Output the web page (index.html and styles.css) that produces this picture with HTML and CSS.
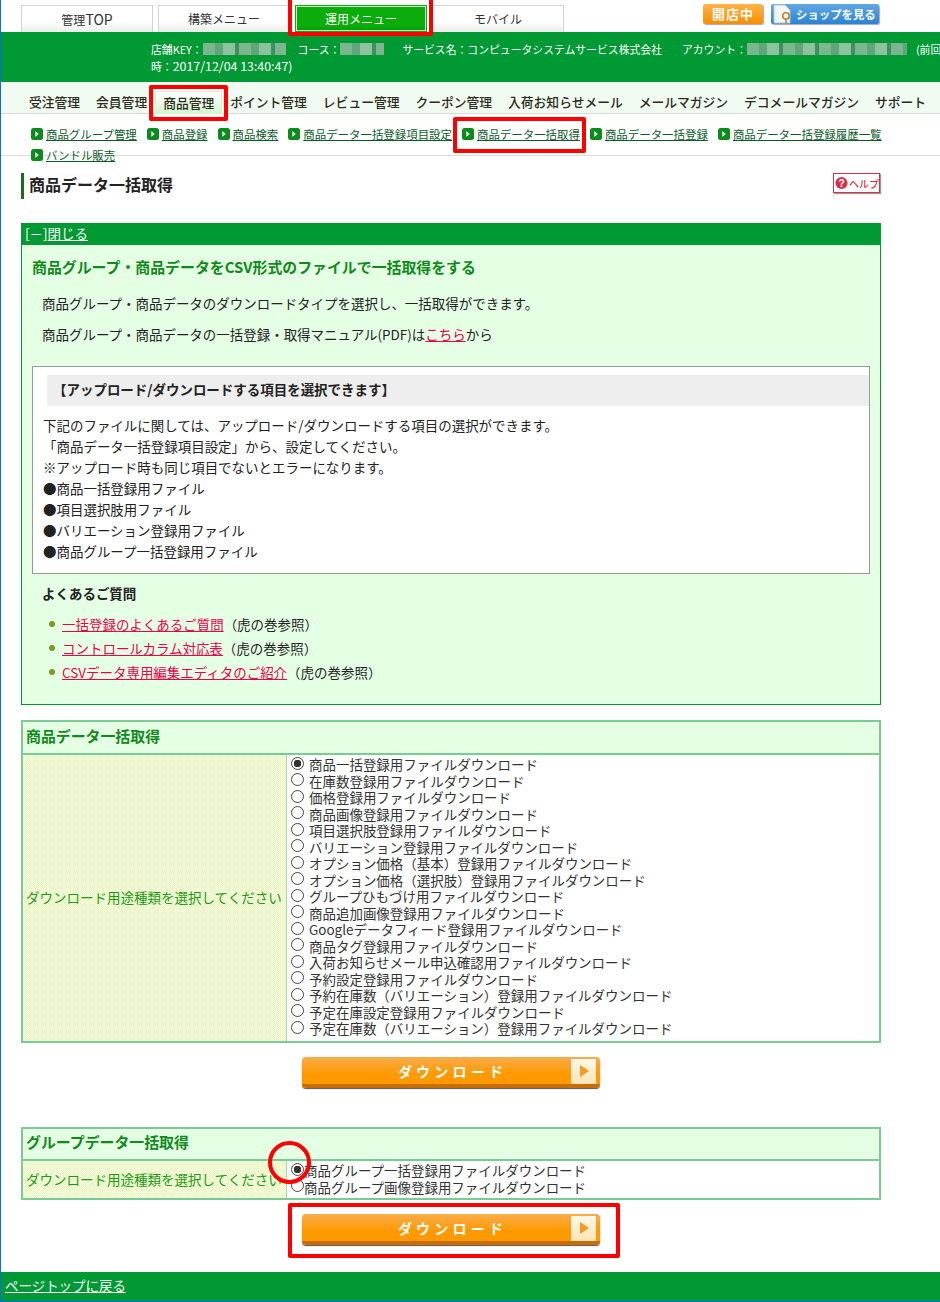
FILE: index.html
```html
<!DOCTYPE html>
<html lang="ja">
<head>
<meta charset="utf-8">
<title>商品データ一括取得</title>
<link rel="stylesheet" href="styles.css">
</head>
<body>
<svg class="defs" width="0" height="0" aria-hidden="true">
  <symbol id="sq" viewBox="0 0 12 12">
    <rect width="12" height="12" rx="2.5" fill="#0b8a1e"/>
    <path d="M4.6 3.6 7.4 6 4.6 8.4Z" fill="#fff" stroke="#fff" stroke-width=".5" stroke-linejoin="round"/>
  </symbol>
</svg>
<div class="page">
  <div class="topbar">
    <div class="tabs">
      <a class="tab">管理<span class="lat">TOP</span></a>
      <a class="tab">構築メニュー</a>
      <a class="tab tab-on">運用メニュー</a>
      <a class="tab">モバイル</a>
    </div>
    <div class="topbtns">
      <span class="pill pill-open">開店中</span>
      <span class="pill pill-shop">
        <svg class="shop-ic" viewBox="0 0 24 20" width="24" height="20"><path d="M3 1h11l5 5v13H3z" fill="#f4f6f8" stroke="#b9c6d2"/><circle cx="15" cy="12" r="3.2" fill="none" stroke="#b58a2a" stroke-width="1.6"/><path d="M15 15v4" stroke="#b58a2a" stroke-width="1.6"/></svg>ショップを見る
      </span>
    </div>
  </div>
  <div class="shopinfo">
    <div class="infoline">店舗KEY：<span class="mosaic m83"></span><span class="sp"></span>コース：<span class="mosaic m44"></span><span class="sp3"></span>サービス名：コンピュータシステムサービス株式会社<span class="sp4"></span>アカウント：<span class="mosaic m160"></span><span class="sp2"></span>(前回</div>
    <div class="infoline">時：<span class="stamp">2017/12/04 13:40:47)</span></div>
  </div>
  <nav class="mainnav">
    <a class="mn">受注管理</a><a class="mn">会員管理</a><a class="mn mn-on">商品管理</a><a class="mn">ポイント管理</a><a class="mn">レビュー管理</a><a class="mn">クーポン管理</a><a class="mn">入荷お知らせメール</a><a class="mn">メールマガジン</a><a class="mn">デコメールマガジン</a><a class="mn">サポート</a>
  </nav>
  <div class="subwrap">
    <div class="subnav">
      <a class="sn"><svg class="snic"><use href="#sq"/></svg><span>商品グループ管理</span></a>
      <a class="sn"><svg class="snic"><use href="#sq"/></svg><span>商品登録</span></a>
      <a class="sn"><svg class="snic"><use href="#sq"/></svg><span>商品検索</span></a>
      <a class="sn"><svg class="snic"><use href="#sq"/></svg><span>商品データ一括登録項目設定</span></a>
      <a class="sn"><svg class="snic"><use href="#sq"/></svg><span>商品データ一括取得</span></a>
      <a class="sn"><svg class="snic"><use href="#sq"/></svg><span>商品データ一括登録</span></a>
      <a class="sn"><svg class="snic"><use href="#sq"/></svg><span>商品データ一括登録履歴一覧</span></a>
      <a class="sn"><svg class="snic"><use href="#sq"/></svg><span>バンドル販売</span></a>
    </div>
  </div>
  <main class="content">
    <div class="titlerow">
      <h1 class="pagetitle">商品データ一括取得</h1>
      <a class="helpbtn"><svg viewBox="0 0 14 14" width="14" height="14"><circle cx="7" cy="7" r="6.5" fill="#d8304a"/><text x="7" y="11" text-anchor="middle" class="qm">?</text></svg><span>ヘルプ</span></a>
    </div>

    <section class="infobox">
      <div class="infohead">[－]<a class="closelink">閉じる</a></div>
      <div class="infobody">
        <h2 class="infotitle">商品グループ・商品データをCSV形式のファイルで一括取得をする</h2>
        <p class="lead">商品グループ・商品データのダウンロードタイプを選択し、一括取得ができます。</p>
        <p class="lead lead2">商品グループ・商品データの一括登録・取得マニュアル(PDF)は<a class="pink">こちら</a>から</p>
        <div class="notebox">
          <div class="notehead">【アップロード/ダウンロードする項目を選択できます】</div>
          <div class="notelines">
            <div>下記のファイルに関しては、アップロード/ダウンロードする項目の選択ができます。</div>
            <div>「商品データ一括登録項目設定」から、設定してください。</div>
            <div>※アップロード時も同じ項目でないとエラーになります。</div>
            <div>●商品一括登録用ファイル</div>
            <div>●項目選択肢用ファイル</div>
            <div>●バリエーション登録用ファイル</div>
            <div>●商品グループ一括登録用ファイル</div>
          </div>
        </div>
        <h3 class="faqtitle">よくあるご質問</h3>
        <ul class="faq">
          <li><a class="pink">一括登録のよくあるご質問</a>（虎の巻参照）</li>
          <li><a class="pink">コントロールカラム対応表</a>（虎の巻参照）</li>
          <li><a class="pink">CSVデータ専用編集エディタのご紹介</a>（虎の巻参照）</li>
        </ul>
      </div>
    </section>

    <section class="formbox first">
      <h2 class="formhead">商品データ一括取得</h2>
      <div class="formrow">
        <div class="formlabel">ダウンロード用途種類を選択してください</div>
        <div class="formopts">
          <label class="opt"><input type="radio" name="a" checked>商品一括登録用ファイルダウンロード</label>
          <label class="opt"><input type="radio" name="a">在庫数登録用ファイルダウンロード</label>
          <label class="opt"><input type="radio" name="a">価格登録用ファイルダウンロード</label>
          <label class="opt"><input type="radio" name="a">商品画像登録用ファイルダウンロード</label>
          <label class="opt"><input type="radio" name="a">項目選択肢登録用ファイルダウンロード</label>
          <label class="opt"><input type="radio" name="a">バリエーション登録用ファイルダウンロード</label>
          <label class="opt"><input type="radio" name="a">オプション価格（基本）登録用ファイルダウンロード</label>
          <label class="opt"><input type="radio" name="a">オプション価格（選択肢）登録用ファイルダウンロード</label>
          <label class="opt"><input type="radio" name="a">グループひもづけ用ファイルダウンロード</label>
          <label class="opt"><input type="radio" name="a">商品追加画像登録用ファイルダウンロード</label>
          <label class="opt"><input type="radio" name="a">Googleデータフィード登録用ファイルダウンロード</label>
          <label class="opt"><input type="radio" name="a">商品タグ登録用ファイルダウンロード</label>
          <label class="opt"><input type="radio" name="a">入荷お知らせメール申込確認用ファイルダウンロード</label>
          <label class="opt"><input type="radio" name="a">予約設定登録用ファイルダウンロード</label>
          <label class="opt"><input type="radio" name="a">予約在庫数（バリエーション）登録用ファイルダウンロード</label>
          <label class="opt"><input type="radio" name="a">予定在庫設定登録用ファイルダウンロード</label>
          <label class="opt"><input type="radio" name="a">予定在庫数（バリエーション）登録用ファイルダウンロード</label>
        </div>
      </div>
    </section>
    <div class="btnrow btnrow1"><button class="dl" type="button"><span class="dltext">ダウンロード</span><span class="dlarrow"></span></button></div>

    <section class="formbox second">
      <h2 class="formhead">グループデータ一括取得</h2>
      <div class="formrow">
        <div class="formlabel">ダウンロード用途種類を選択してください</div>
        <div class="formopts tight">
          <label class="opt"><input type="radio" name="b" checked>商品グループ一括登録用ファイルダウンロード</label>
          <label class="opt"><input type="radio" name="b">商品グループ画像登録用ファイルダウンロード</label>
        </div>
      </div>
    </section>
    <div class="btnrow btnrow2"><button class="dl" type="button"><span class="dltext">ダウンロード</span><span class="dlarrow"></span></button></div>
  </main>
  <footer class="foot"><a class="toplink">ページトップに戻る</a></footer>
</div>
<div class="mark mark-tab"></div>
<div class="mark mark-nav"></div>
<div class="mark mark-sub"></div>
<div class="mark mark-btn"></div>
<div class="mark mark-circle"></div>
</body>
</html>
```
FILE: styles.css
```css
* { box-sizing: border-box; }
html, body { margin: 0; padding: 0; }
body {
  width: 940px;
  height: 1302px;
  overflow: hidden;
  position: relative;
  background: #fff;
  color: #222;
  font-family: "Noto Sans CJK JP", "Noto Sans", sans-serif;
  font-size: 13.47px;
}
.defs { position: absolute; }
.page {
  height: 1302px;
  border-left: 1px solid #0a6fdc;
  border-bottom: 1px solid #0a6fdc;
  display: flex;
  flex-direction: column;
}
a { color: inherit; }

/* top */
.topbar { height: 32px; display: flex; justify-content: space-between; padding: 0 61px 0 20px; }
.tabs { display: flex; gap: 5px; padding-top: 5px; }
.tab {
  width: 132px; height: 27px;
  border: 1px solid #d4d4d4; border-bottom: 0;
  background: linear-gradient(#fff 60%, #ececec);
  font-size: 12px; line-height: 26px; text-align: center; color: #333;
}
.lat { font-size: 14px; }
.tab-on {
  background: linear-gradient(#0aad0a 80%, #0b990b);
  color: #fff;
  border: 1px solid #0aad0a;
  box-shadow: inset 0 0 0 1px #cfeecf;
}
.topbtns { display: flex; gap: 8px; padding-top: 4px; }
.pill {
  height: 20px; color: #fff; font-weight: 700; font-size: 13px; line-height: 19px;
  border-radius: 2px; box-shadow: 1px 1px 1px #aaa; text-align: center;
}
.pill-open { width: 60px; background: linear-gradient(#ffb347, #f78f00); letter-spacing: 1px; }
.pill-shop {
  width: 108px; background: linear-gradient(#62a8e6, #2a84d2);
  display: flex; align-items: center; font-size: 11.4px; white-space: nowrap; overflow: hidden;
}
.shop-ic { flex: none; margin-right: 1px; }
.shopinfo { height: 50px; background: #009933; color: #fff; padding: 9px 0 0 150px; overflow: hidden; }
.infoline { font-size: 10.83px; line-height: 16.5px; white-space: nowrap; display: flex; align-items: center; }
.stamp { font-size: 12.4px; }
.sp { display: inline-block; flex: none; width: 12px; }
.sp2 { display: inline-block; flex: none; width: 9px; }
.sp3 { display: inline-block; flex: none; width: 18px; }
.sp4 { display: inline-block; flex: none; width: 20px; }
.mosaic {
  display: inline-block; flex: none; height: 12px;
  background: repeating-linear-gradient(90deg, #7ab78f 0 12px, #5fa67a 12px 20px, #8cc2a0 20px 32px, #3f9060 32px 36px);
}
.m83 { width: 83px; }
.m44 { width: 44px; }
.m160 { width: 160px; }

.mainnav {
  height: 32px; padding: 0 0 0 20px; display: flex; align-items: flex-end;
  background: #f1fbf1; border-bottom: 1px solid #d6dcd6;
}
.mn {
  padding: 0 8px; height: 23px; line-height: 21px; font-size: 12.78px; font-weight: 500;
  color: #2b2b1a; white-space: nowrap; margin-bottom: -1px;
}
.mn-on {
  background: linear-gradient(#fff, #d4f5cf);
  border: 1px solid #dfe8df; border-bottom: 0;
  padding: 0 7px;
}
.subwrap { height: 42px; border-bottom: 1px solid #ddd; position: relative; }
.subnav {
  width: 885px; padding: 9px 0 0 30px;
  display: flex; flex-wrap: wrap; column-gap: 10px;
}
.sn { display: flex; align-items: center; gap: 3px; height: 21px; font-size: 11.45px; color: #0c5a2a; white-space: nowrap; }
.sn span { text-decoration: underline; }
.snic { width: 12px; height: 12px; }

/* content */
.content { padding: 0 0 0 20px; width: 880px; flex: 1; }
.titlerow { display: flex; justify-content: space-between; align-items: flex-start; margin-top: 17px; height: 26px; }
.pagetitle {
  margin: 0; height: 26px; border-left: 3px solid #1a6b1a; padding-left: 5px;
  font-size: 16px; line-height: 22px; font-weight: 700; color: #222;
}
.helpbtn {
  width: 47px; height: 20px; margin-right: 1px; border: 1px solid #d8304a; background: #fff;
  box-shadow: 1px 1px 1px #999; display: flex; align-items: center; gap: 1px; padding-left: 1px;
  font-size: 10px; font-weight: 500; color: #d8304a; white-space: nowrap;
}
.qm { fill: #fff; font-family: "Liberation Sans", sans-serif; font-weight: 700; font-size: 11px; }

.infobox { margin-top: 24px; border: 1px solid #009933; height: 482px; background: #e5ffe5; }
.infohead { height: 22px; background: #009933; color: #fff; padding-left: 4px; line-height: 21px; margin: -1px -1px 0; }
.closelink { text-decoration: underline; }
.infobody { padding: 0 10px; }
.infotitle { margin: 0; padding-top: 10px; height: 43px; font-size: 14.9px; line-height: 24px; font-weight: 700; color: #118a1c; }
.lead { margin: 0; padding-left: 10px; line-height: 21px; padding-top: 5px; height: 31px; }
.lead2 { height: 31px; }
.pink { color: #e8004c; text-decoration: underline; }
.notebox { margin-top: 16px; height: 208px; width: 838px; border: 1px solid #999; background: #fff; padding: 8px 0 0 14px; }
.notehead { height: 31px; background: #eee; padding-left: 6px; font-weight: 700; line-height: 29px; width: 822px; }
.notelines { margin-left: -4px; padding-top: 9px; line-height: 21px; }
.faqtitle { margin: 0; padding: 9px 0 0 10px; font-size: 13.47px; line-height: 21px; font-weight: 700; height: 38px; }
.faq { list-style: none; margin: 0; padding: 0 0 0 30px; }
.faq li { height: 24px; line-height: 24px; position: relative; }
.faq li::before {
  content: ""; position: absolute; left: -13px; top: 9px; width: 6px; height: 6px;
  border-radius: 50%; background: #7a9a1e;
}

.formbox { border: 2px solid #7acb95; }
.first { margin-top: 15px; height: 323px; }
.second { height: 73px; }
.formhead { margin: 0; background: #e5ffe5; border-bottom: 2px solid #7acb95; padding-left: 3px; font-size: 14.9px; font-weight: 700; color: #118a1c; }
.first .formhead { height: 33px; line-height: 27px; }
.second .formhead { height: 32px; line-height: 25px; }
.formrow { display: flex; }
.first .formrow { height: 286px; }
.second .formrow { height: 37px; }
.formlabel {
  width: 264px; flex: none; display: flex; align-items: center; padding: 0 0 2px 3px;
  border-right: 1px solid #a8d8a8;
  background: repeating-conic-gradient(#e6f6bc 0 25%, #f8fde6 0 50%) 0 0 / 2px 2px;
  color: #229911; font-size: 13.5px; white-space: nowrap;
}
.formopts { padding: 1px 0 0 4px; flex: 1; }
.tight { padding-top: 1px; }
.opt { display: flex; align-items: center; height: 16.5px; line-height: 16.5px; color: #333; white-space: nowrap; }
.opt input {
  appearance: none; flex: none; margin: 0 5px 2px 0; width: 13px; height: 13px;
  border: 1px solid #444; border-radius: 50%; background: #fff;
}
.opt input:checked { background: radial-gradient(circle, #333 0 3.5px, #fff 4px); }
.tight .opt input { margin-right: 0; }
.btnrow { display: flex; padding-left: 281px; }
.btnrow1 { height: 84px; padding-top: 14px; }
.btnrow2 { padding-top: 14px; }
.dl {
  width: 298px; height: 31px; padding: 0 0 4px; border: 0; border-radius: 4px; position: relative;
  background: linear-gradient(#f7ad4d, #ff9900 55%, #ff9900 88%, #c96d00 88%);
  box-shadow: 0 1px 1px #555;
  font-family: inherit; color: #fff; font-weight: 700; font-size: 14px; letter-spacing: 4.2px;
}
.dltext { display: block; text-align: center; padding-left: 3px; line-height: 26px; }
.dlarrow {
  position: absolute; right: 4px; top: 2px; width: 25px; height: 25px;
  background: linear-gradient(#fff8e8, #fde4b8);
}
.dlarrow::after {
  content: ""; position: absolute; left: 9px; top: 6px;
  border-left: 9px solid #f79a1e; border-top: 6.5px solid transparent; border-bottom: 6.5px solid transparent;
}
.foot { height: 29px; background: #009933; color: #fff; padding-left: 4px; line-height: 27px; margin-top: auto; }
.toplink { text-decoration: underline; }

/* annotations */
.mark { position: absolute; border: 4px solid #f00; border-radius: 2px; pointer-events: none; }
.mark-tab { left: 288px; top: -4px; width: 145px; height: 40px; }
.mark-nav { left: 149px; top: 85px; width: 79px; height: 36px; }
.mark-sub { left: 453px; top: 117px; width: 133px; height: 36px; }
.mark-btn { left: 288px; top: 1203px; width: 332px; height: 55px; }
.mark-circle { left: 268px; top: 1141px; width: 43px; height: 43px; border-radius: 50%; }
```
